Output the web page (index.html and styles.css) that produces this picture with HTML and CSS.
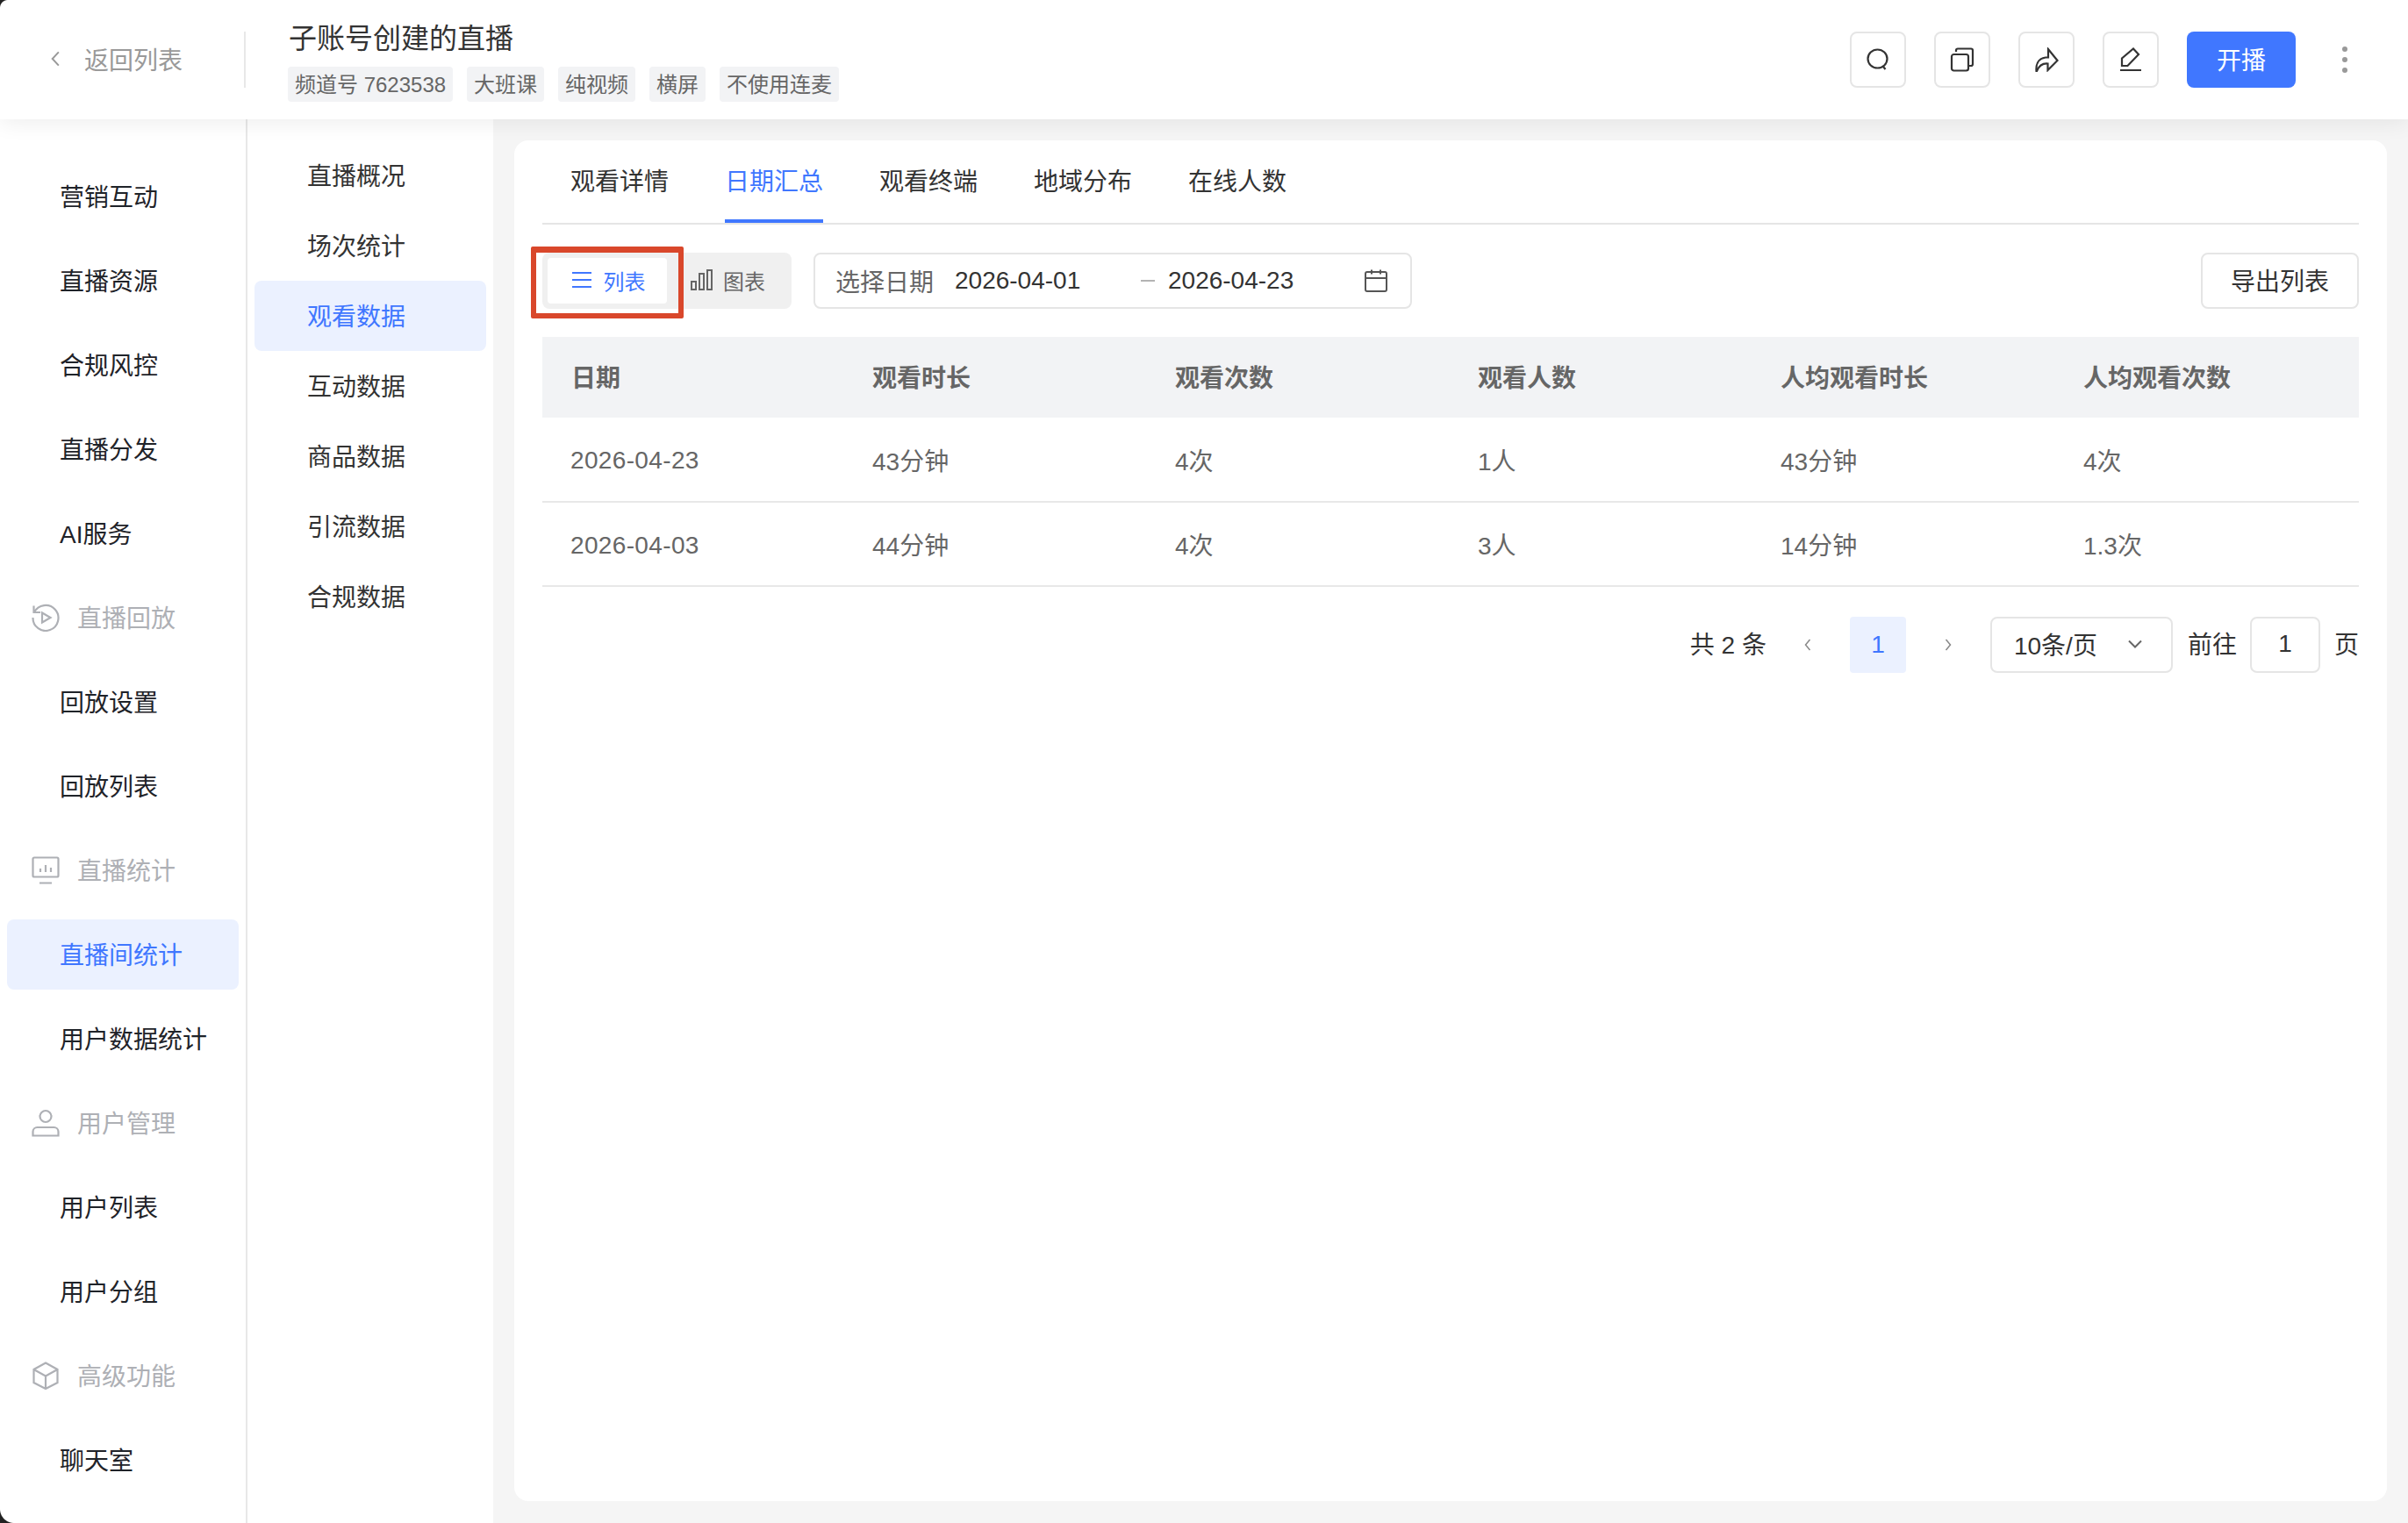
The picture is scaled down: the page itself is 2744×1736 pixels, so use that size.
FILE: index.html
```html
<!DOCTYPE html>
<html lang="zh-CN">
<head>
<meta charset="utf-8">
<title>直播统计</title>
<link rel="stylesheet" href="styles.css">
</head>
<body>
<div class="app">
  <header class="topbar">
    <a class="back">
      <svg class="back-ico" viewBox="0 0 12 20"><path d="M9.500 3 3 10l6.500 7"/></svg>
      <span>返回列表</span>
    </a>
    <div class="live-info">
      <div class="live-title">子账号创建的直播</div>
      <div class="tags">
        <span class="tag">频道号 7623538</span>
        <span class="tag">大班课</span>
        <span class="tag">纯视频</span>
        <span class="tag">横屏</span>
        <span class="tag">不使用连麦</span>
      </div>
    </div>
    <div class="actions">
      <button class="icon-btn"><svg viewBox="0 0 28 28"><ellipse cx="13.500" cy="13" rx="11" ry="10.500"/><path d="m20 22 2.500 3"/></svg></button>
      <button class="icon-btn"><svg viewBox="0 0 28 28"><rect x="2" y="8" width="19" height="18.500" rx="2.500"/><path d="M7 5V3.500a2 2 0 0 1 2-2h15a2 2 0 0 1 2 2V19a2 2 0 0 1-2 2h-3"/></svg></button>
      <button class="icon-btn"><svg viewBox="0 0 28 28"><path d="M2.500 27c-.500-6 1-14.500 10.500-15.500 2 0 2.500 0 3 0V2l10.500 13-11 11V18.500c-6-.500-10 2.500-12.500 8.500Z"/></svg></button>
      <button class="icon-btn"><svg viewBox="0 0 28 28"><path d="M2 26h24M4 21v-8.500L17 1.500l6 6.500L10.500 21H4Z"/></svg></button>
      <button class="primary">开播</button>
      <span class="more"><i></i><i></i><i></i></span>
    </div>
  </header>

  <div class="body">
    <nav class="rail">
      <a class="rail-item">营销互动</a>
      <a class="rail-item">直播资源</a>
      <a class="rail-item">合规风控</a>
      <a class="rail-item">直播分发</a>
      <a class="rail-item">AI服务</a>
      <div class="rail-group">
        <svg viewBox="0 0 32 32"><path d="M2.500 2.500v7.500h7.500M3 10A14.500 14.500 0 1 1 1.500 16"/><path d="M12 10.500v11l9.500-5.500z"/></svg>
        <span>直播回放</span>
      </div>
      <a class="rail-item">回放设置</a>
      <a class="rail-item">回放列表</a>
      <div class="rail-group">
        <svg viewBox="0 0 32 32"><path d="M3 1.500h26a1.500 1.500 0 0 1 1.500 1.500v19a1.500 1.500 0 0 1-1.500 1.500H3A1.500 1.500 0 0 1 1.500 22V3A1.500 1.500 0 0 1 3 1.500ZM9 30.500h14M10 14v4M16 10v8M22 13v5"/></svg>
        <span>直播统计</span>
      </div>
      <a class="rail-item active">直播间统计</a>
      <a class="rail-item">用户数据统计</a>
      <div class="rail-group">
        <svg viewBox="0 0 32 32"><circle cx="16" cy="8.500" r="6.500"/><path d="M1.500 30.500V26a5 5 0 0 1 5-5h19a5 5 0 0 1 5 5v4.500Z"/></svg>
        <span>用户管理</span>
      </div>
      <a class="rail-item">用户列表</a>
      <a class="rail-item">用户分组</a>
      <div class="rail-group">
        <svg viewBox="0 0 32 32"><path d="M16 1.500 29.500 9v15L16 31 2.500 24V9ZM2.500 9 16 16.500 29.500 9M16 16.500V31"/></svg>
        <span>高级功能</span>
      </div>
      <a class="rail-item">聊天室</a>
    </nav>

    <nav class="subnav">
      <a class="sub-item">直播概况</a>
      <a class="sub-item">场次统计</a>
      <a class="sub-item active">观看数据</a>
      <a class="sub-item">互动数据</a>
      <a class="sub-item">商品数据</a>
      <a class="sub-item">引流数据</a>
      <a class="sub-item">合规数据</a>
    </nav>

    <main class="content">
      <section class="card">
        <div class="tabs">
          <a class="tab">观看详情</a>
          <a class="tab active">日期汇总</a>
          <a class="tab">观看终端</a>
          <a class="tab">地域分布</a>
          <a class="tab">在线人数</a>
        </div>

        <div class="toolbar">
          <div class="toggle">
            <a class="toggle-item on">
              <svg viewBox="0 0 22 20"><path d="M0 2h22M0 10h22M0 18h22"/></svg>
              <span>列表</span>
            </a>
            <a class="toggle-item off">
              <svg viewBox="0 0 26 24"><rect x="1" y="14" width="5" height="9"/><rect x="10" y="5" width="5" height="18"/><rect x="19" y="1" width="5" height="22"/></svg>
              <span>图表</span>
            </a>
            <span class="callout"></span>
          </div>
          <div class="range">
            <span class="range-label">选择日期</span>
            <span class="range-from">2026-04-01</span>
            <span class="range-dash"></span>
            <span class="range-to">2026-04-23</span>
            <svg viewBox="0 0 26 26"><path d="M3 3h20a2 2 0 0 1 2 2v18a2 2 0 0 1-2 2H3a2 2 0 0 1-2-2V5a2 2 0 0 1 2-2ZM1 10h24M8 .500v5M18 .500v5"/></svg>
          </div>
          <button class="export">导出列表</button>
        </div>

        <table class="grid">
          <thead>
            <tr><th>日期</th><th>观看时长</th><th>观看次数</th><th>观看人数</th><th>人均观看时长</th><th>人均观看次数</th></tr>
          </thead>
          <tbody>
            <tr><td class="date">2026-04-23</td><td>43分钟</td><td>4次</td><td>1人</td><td>43分钟</td><td>4次</td></tr>
            <tr><td class="date">2026-04-03</td><td>44分钟</td><td>4次</td><td>3人</td><td>14分钟</td><td>1.3次</td></tr>
          </tbody>
        </table>

        <div class="pager">
          <span class="total">共 2 条</span>
          <svg class="chev prev" viewBox="0 0 10 16"><path d="M7.500 2 2.500 8l5 6"/></svg>
          <span class="page-num">1</span>
          <svg class="chev next" viewBox="0 0 10 16"><path d="M2.500 2l5 6-5 6"/></svg>
          <div class="size-select">
            <span>10条/页</span>
            <svg viewBox="0 0 18 12"><path d="M2 2.500 9 9.500l7-7"/></svg>
          </div>
          <span class="goto">前往</span>
          <span class="page-input">1</span>
          <span class="page-unit">页</span>
        </div>
      </section>
    </main>
  </div>

  <span class="corner tl"></span>
  <span class="corner bl"></span>
</div>
</body>
</html>
```

FILE: styles.css
```css
* { box-sizing: border-box; }
html, body { margin: 0; padding: 0; }
body {
  font-family: "Liberation Sans", "Noto Sans CJK SC", sans-serif;
  font-size: 28px;
  color: #333;
  background: #fff;
}
a { display: block; }
button { font: inherit; padding: 0; cursor: pointer; }
svg { display: block; fill: none; stroke: currentColor; stroke-width: 2; }

.app { position: relative; width: 2744px; height: 1736px; overflow: hidden; display: flex; flex-direction: column; }

/* top bar */
.topbar {
  position: relative; z-index: 2;
  flex: none; height: 136px; background: #fff;
  display: flex; align-items: center;
  box-shadow: 0 4px 24px rgba(0, 0, 0, .07);
}
.back { width: 278px; display: flex; align-items: center; padding: 0 0 2px 56px; color: #999; }
.back-ico { width: 14px; height: 22px; margin-right: 26px; stroke-width: 1.800; }
.live-info { flex: 1; height: 100%; display: flex; flex-direction: column; padding-left: 50px; position: relative; padding-top: 24px; }
.live-info::before { content: ""; position: absolute; left: 0; top: 36px; width: 2px; height: 64px; background: #e8e8e8; }
.live-title { font-size: 32px; line-height: 40px; color: #333; height: 40px; margin: 0 0 12px 1px; }
.tags { display: flex; gap: 16px; }
.tag { height: 40px; line-height: 42px; padding: 0 8px; font-size: 24px; color: #666; background: #f2f3f5; border-radius: 4px; }
.actions { display: flex; align-items: center; gap: 32px; padding-right: 72px; }
.icon-btn {
  width: 64px; height: 64px; display: flex; align-items: center; justify-content: center;
  background: #fff; border: 2px solid #e5e5e5; border-radius: 8px; color: #333;
}
.icon-btn svg { width: 28px; height: 28px; stroke-width: 2.200; }
.primary { width: 124px; height: 64px; padding-bottom: 3px; background: #4077ff; color: #fff; border: 0; border-radius: 8px; font-size: 28px; }
.more { display: flex; flex-direction: column; gap: 6px; margin-left: 21px; margin-right: -3px; }
.more i { width: 6px; height: 6px; border-radius: 50%; background: #999; }

.body { flex: 1; min-height: 0; display: flex; }

/* first rail */
.rail { flex: none; width: 282px; padding: 48px 8px 0; border-right: 2px solid #e8e8e8; background: #fff; display: flex; flex-direction: column; gap: 16px; }
.rail-item { flex: none; height: 80px; line-height: 84px; padding-left: 60px; color: #1f2329; border-radius: 8px; white-space: nowrap; }
.rail-item.active { background: #ebf1ff; color: #4077ff; }
.rail-group { flex: none; height: 80px; display: flex; align-items: center; padding-left: 28px; color: #aeb0b5; }
.rail-group span { margin-top: -3px; }
.rail-group svg { width: 32px; height: 32px; margin-right: 20px; stroke-width: 2.200; }

/* second rail */
.subnav { flex: none; width: 280px; padding: 24px 8px 0; background: #fff; }
.sub-item { height: 80px; line-height: 84px; padding-left: 60px; color: #333; border-radius: 8px; }
.sub-item.active { background: #ebf1ff; color: #4077ff; }

/* content */
.content { flex: 1; min-width: 0; background: #f5f5f5; padding: 24px 24px 25px; }
.card { height: 100%; background: #fff; border-radius: 16px; padding: 0 32px; }

.tabs { height: 96px; display: flex; gap: 64px; padding-left: 32px; border-bottom: 2px solid #e5e5e5; }
.tab { height: 94px; line-height: 96px; color: #333; }
.tab.active { color: #4077ff; border-bottom: 4px solid #4077ff; }

.toolbar { display: flex; align-items: center; height: 64px; margin-top: 32px; }
.toggle { position: relative; width: 284px; height: 64px; background: #f0f0f0; border-radius: 8px; padding: 6px; display: flex; font-size: 24px; margin-right: 25px; }
.toggle-item { display: flex; align-items: center; color: #666; padding-bottom: 2px; }
.toggle-item.off { padding-left: 27px; }
.toggle-item.off svg { width: 26px; height: 24px; margin-right: 11px; stroke-width: 2; }
.toggle-item.on { width: 136px; height: 52px; justify-content: center; padding-left: 3px; background: #fff; border-radius: 4px; color: #4077ff; }
.toggle-item.on svg { width: 22px; height: 20px; margin-right: 14px; }
.callout { position: absolute; left: -13px; top: -7px; width: 174px; height: 82px; border: solid #d9472b; border-width: 7px 6px 6px 6px; border-radius: 2px; }

.range { width: 682px; height: 64px; display: flex; align-items: center; padding: 0 26px 0 23px; border: 2px solid #e5e5e5; border-radius: 8px; color: #333; }
.range-label { color: #666; width: 136px; padding-bottom: 1px; }
.range-from { width: 212px; }
.range-dash { width: 16px; height: 2px; background: #b3b3b3; margin-right: 15px; }
.range-to { flex: 1; }
.range svg { width: 26px; height: 26px; color: #555; }

.export { margin-left: auto; width: 180px; height: 64px; padding-bottom: 2px; background: #fff; border: 2px solid #e5e5e5; border-radius: 8px; color: #333; }

.grid { width: 100%; border-collapse: collapse; table-layout: fixed; margin-top: 32px; }
.grid th { height: 92px; background: #f2f3f5; padding: 0 0 3px 31px; text-align: left; font-weight: 700; color: #666; }
.grid th:first-child { padding-left: 33px; }
.grid td { height: 96px; padding: 0 0 0 31px; color: #666; border-bottom: 2px solid #e8e8e8; }
.grid td.date { padding: 3px 0 0 32px; letter-spacing: .35px; }

.pager { display: flex; align-items: center; height: 64px; margin-top: 34px; color: #333; justify-content: flex-end; }
.total { margin-right: 42px; padding-bottom: 4px; }
.chev { width: 10px; height: 16px; color: #888; stroke-width: 1.500; }
.page-num { width: 64px; height: 64px; line-height: 64px; text-align: center; background: #ebf1ff; color: #4077ff; border-radius: 4px; margin: 0 43px; }
.next { margin-right: 43px; }
.size-select { width: 208px; height: 64px; display: flex; align-items: center; padding: 0 0 3px 25px; border: 2px solid #e5e5e5; border-radius: 8px; }
.size-select svg { width: 18px; height: 12px; color: #666; margin-left: 34px; }
.goto { margin-left: 17px; margin-right: 15px; padding-bottom: 4px; }
.page-input { width: 80px; height: 64px; line-height: 58px; text-align: center; border: 2px solid #e5e5e5; border-radius: 8px; }
.page-unit { margin-left: 16px; padding-bottom: 4px; }

/* window corners, dark behind the rounded edge of the captured window */
.corner { position: absolute; z-index: 5; }
.tl { left: 0; top: 0; width: 9px; height: 9px; background: radial-gradient(circle at 9px 9px, transparent 8.500px, #222 9.500px); }
.bl { left: 0; bottom: 0; width: 16px; height: 16px; background: radial-gradient(circle at 16px 0, transparent 15.500px, #222 16.500px); }
```
